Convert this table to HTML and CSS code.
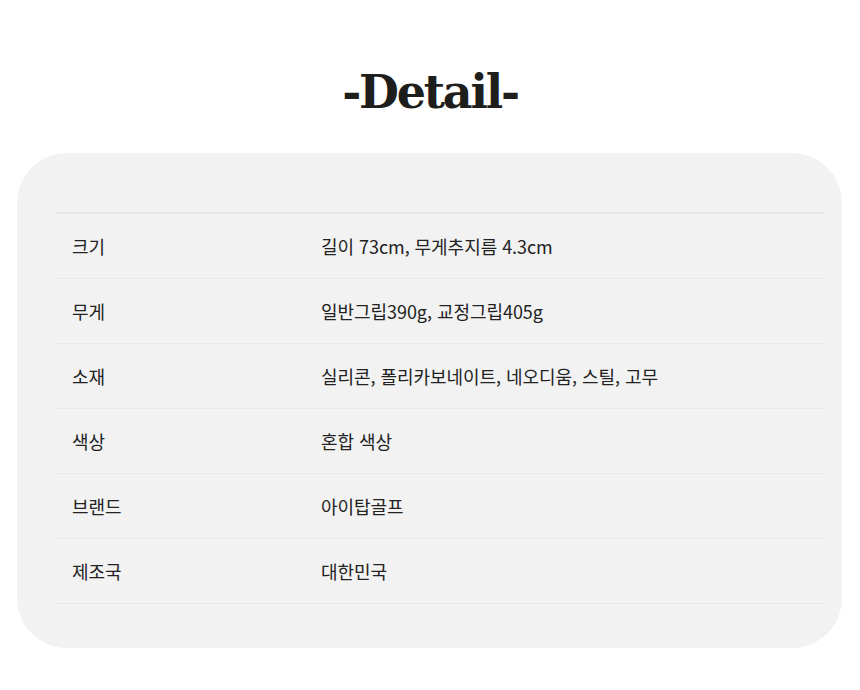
FILE: index.html
```html
<!DOCTYPE html>
<html lang="ko">
<head>
<meta charset="utf-8">
<link rel="stylesheet" href="styles.css">
</head>
<body>
<div class="page">
  <h1 class="title">-Detail-</h1>
  <div class="card">
    <table class="spec">
      <tr><th>크기</th><td>길이 73cm, 무게추지름 4.3cm</td></tr>
      <tr><th>무게</th><td>일반그립390g, 교정그립405g</td></tr>
      <tr><th>소재</th><td>실리콘, 폴리카보네이트, 네오디움, 스틸, 고무</td></tr>
      <tr><th>색상</th><td>혼합 색상</td></tr>
      <tr><th>브랜드</th><td>아이탑골프</td></tr>
      <tr><th>제조국</th><td>대한민국</td></tr>
    </table>
  </div>
</div>
</body>
</html>
```
FILE: styles.css
```css
html, body { margin: 0; padding: 0; background: #fff; }
.page { width: 860px; height: 690px; padding-top: 62px; box-sizing: border-box; }
.title {
  margin: 0;
  text-align: center;
  font-family: "DejaVu Serif", "Liberation Serif", serif;
  font-weight: bold;
  font-size: 46px;
  line-height: 60px;
  color: #1e1e1c;
  letter-spacing: -2.2px;
}
.card {
  margin: 31px 18px 0 17px;
  background: #f2f2f2;
  border-radius: 50px;
  padding: 59px 17px 44px 38px;
}
.spec {
  width: 100%;
  border-collapse: collapse;
  border-top: 2px solid #e6e6e6;
  font-family: "Noto Sans CJK KR", "Noto Sans", sans-serif;
  font-size: 18px;
  line-height: 24px;
  color: #222;
  letter-spacing: -0.05px;
}
.spec tr { border-bottom: 1px solid #e8e8e8; }
.spec th, .spec td {
  height: 64px;
  padding: 0;
  text-align: left;
  font-weight: normal;
  vertical-align: middle;
}
.spec th { width: 249px; padding-left: 17px; }
```
